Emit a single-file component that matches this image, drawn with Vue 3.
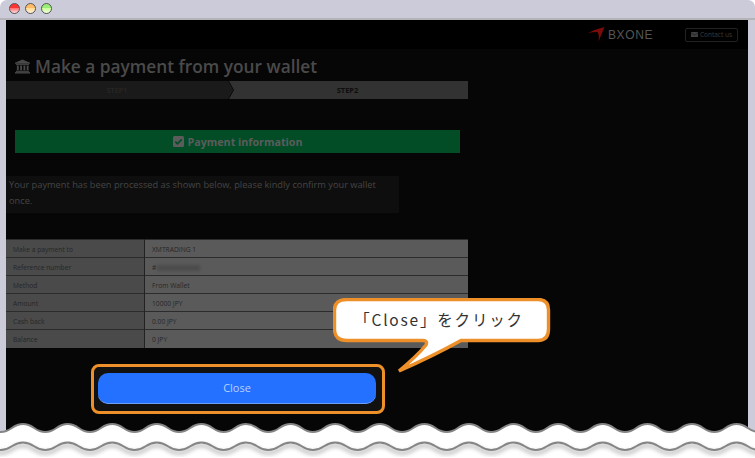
<template>
  <div class="shot">
    <div class="window">
      <!-- Title bar -->
      <div class="titlebar">
        <span class="dot red"></span>
        <span class="dot amber"></span>
        <span class="dot green"></span>
      </div>

      <div class="page">
        <!-- Header -->
        <header class="topbar">
          <div class="logo">
            <svg width="17" height="15" viewBox="0 0 17 15">
              <path d="M0 6 Q8 2 16.500 0 L10.500 14.500 Q11.500 8 9.500 5 Q4.500 5 0 6 Z" fill="#7a0b0b" />
            </svg>
            <span class="logo-text">BXONE</span>
          </div>
          <div class="contact">
            <svg width="7" height="5" viewBox="0 0 14 10">
              <rect width="14" height="10" rx="1" fill="#3f3f3f" />
              <path d="M0 2 L7 6 L14 2" fill="none" stroke="#111" stroke-width="1" />
            </svg>
            Contact us
          </div>
        </header>

        <main class="body">
          <div class="col">
            <h1 class="title">
              <svg width="15" height="15" viewBox="0 0 16 16">
                <path d="M8 0.500 L16 4 V5 H0 V4 Z" fill="#4a4a4a" />
                <rect x="1" y="5.500" width="14" height="1" fill="#4a4a4a" />
                <rect x="2" y="7" width="2" height="5" fill="#4a4a4a" />
                <rect x="5.500" y="7" width="2" height="5" fill="#4a4a4a" />
                <rect x="9" y="7" width="2" height="5" fill="#4a4a4a" />
                <rect x="12.500" y="7" width="2" height="5" fill="#4a4a4a" />
                <rect x="1" y="12.500" width="14" height="1.200" fill="#4a4a4a" />
                <rect x="0" y="14" width="16" height="1.500" fill="#4a4a4a" />
              </svg>
              Make a payment from your wallet
            </h1>

            <div class="steps">
              <div class="step one">STEP1</div>
              <svg class="chevron" width="7" height="18" viewBox="0 0 7 18">
                <rect width="7" height="18" fill="#323232" />
                <path d="M0 0 L5 9 L0 18 Z" fill="#1a1a1a" />
                <path d="M0.500 0 L5.500 9 L0.500 18" fill="none" stroke="#060606" stroke-width="1" />
              </svg>
              <div class="step two">STEP2</div>
            </div>

            <div class="info-bar">
              <svg width="11" height="11" viewBox="0 0 11 11">
                <rect width="11" height="11" rx="1.500" fill="#5c5c5c" />
                <path d="M2.300 5.600 L4.500 7.800 L8.700 3.400" fill="none" stroke="#024d26" stroke-width="1.700" />
              </svg>
              Payment information
            </div>

            <p class="message">Your payment has been processed as shown below, please kindly confirm your wallet once.</p>

            <table class="detail">
              <tbody>
                <tr v-for="row in rows" :key="row.label">
                  <th>{{ row.label }}</th>
                  <td>
                    <template v-if="row.hidden">#<span class="masked"></span></template>
                    <template v-else>{{ row.value }}</template>
                  </td>
                </tr>
              </tbody>
            </table>

            <div class="close-ring">
              <button class="close-btn">Close</button>
            </div>
          </div>
        </main>
      </div>
    </div>

    <!-- Callout -->
    <svg class="callout" width="222" height="78" viewBox="0 0 222 78">
      <path
        d="M14 1.500 H205 Q215.500 1.500 215.500 12 V31 Q215.500 42.500 205 42.500 H128 Q100 58 66 73 Q84 58 93 47 Q95 42.500 90 42.500 H14 Q1.500 42.500 1.500 31 V12 Q1.500 1.500 14 1.500 Z"
        fill="#fff" stroke="#ee9029" stroke-width="3.400" />
      <text x="106" y="28" text-anchor="middle" class="callout-text">「Close」をクリック</text>
    </svg>

    <!-- Torn edge -->
    <svg class="tear" width="755" height="40" viewBox="0 0 755 40">
      <defs>
        <filter id="soft" x="-5%" y="-50%" width="110%" height="200%">
          <feGaussianBlur stdDeviation="2" />
        </filter>
      </defs>
      <path :d="fillPath" fill="#fff" />
      <path :d="lowerWave(3)" fill="none" stroke="#777" stroke-width="3" opacity="0.55" filter="url(#soft)" />
      <path :d="upperWave" fill="none" stroke="#858585" stroke-width="2" />
      <path :d="lowerWave(0)" fill="none" stroke="#858585" stroke-width="2" />
    </svg>
  </div>
</template>

<script setup>
const rows = [
  { label: 'Make a payment to', value: 'XMTRADING 1' },
  { label: 'Reference number', hidden: true },
  { label: 'Method', value: 'From Wallet' },
  { label: 'Amount', value: '10000 JPY' },
  { label: 'Cash back', value: '0.00 JPY' },
  { label: 'Balance', value: '0 JPY' },
]

// y values are relative to the top of the tear svg (page y 418)
const PERIOD = 44.6

function wave(top, bottom) {
  let x = 23 - PERIOD
  let d = `M${x} ${top}`
  while (x < 780) {
    const q = PERIOD / 4
    d += ` C${x + q} ${top} ${x + q} ${bottom} ${x + 2 * q} ${bottom}`
    d += ` C${x + 3 * q} ${bottom} ${x + 3 * q} ${top} ${x + 4 * q} ${top}`
    x += PERIOD
  }
  return d
}

const upperWave = wave(6, 14)
const lowerWave = (shift) => wave(24.5 + shift, 32 + shift)
const fillPath = upperWave + ' V40 H-30 Z'
</script>

<style scoped>
.shot {
  position: relative;
  width: 755px;
  height: 458px;
  overflow: hidden;
  background: #fff;
  font-family: "Open Sans", "Noto Sans", sans-serif;
}

.window {
  height: 458px;
  display: flex;
  flex-direction: column;
  background: #cbcbd9;
  border-radius: 7px 7px 0 0;
  padding: 0 7px 0 6px;
  box-sizing: border-box;
}

/* ── Title bar ── */
.titlebar {
  flex: 0 0 20px;
  box-sizing: border-box;
  display: flex;
  align-items: center;
  gap: 5px;
  padding: 0 0 2px 9px;
  border-bottom: 2px solid #b4b4b8;
  margin: 0 -7px 0 -6px;
}

.dot {
  width: 11px;
  height: 11px;
  border-radius: 50%;
  border: 1px solid #555;
  box-sizing: border-box;
}
.dot.red { background: linear-gradient(#f33 0 50%, #f77 50%, #fdd); }
.dot.amber { background: linear-gradient(#fb6 0 50%, #fd9 50%, #fff0d8); }
.dot.green { background: linear-gradient(#9e7 0 50%, #cf9 50%, #efd); }

/* ── Page ── */
.page {
  flex: 1;
  background: #060606;
  display: flex;
  flex-direction: column;
}

.topbar {
  flex: 0 0 29px;
  background: #000;
  display: flex;
  align-items: center;
  justify-content: flex-end;
  padding-right: 10px;
}

.logo {
  display: flex;
  align-items: center;
  gap: 3px;
  margin-right: 32px;
}

.logo-text {
  font-family: "Liberation Sans", sans-serif;
  font-size: 12px;
  letter-spacing: 0.6px;
  color: #565656;
}

.contact {
  width: 53px;
  height: 14px;
  box-sizing: border-box;
  border: 1px solid #222;
  border-radius: 2px;
  display: flex;
  align-items: center;
  justify-content: center;
  gap: 2px;
  font-size: 6.5px;
  color: #3c3c3c;
}

.col {
  width: 462px;
}

.title {
  margin: 0;
  height: 32px;
  box-sizing: border-box;
  padding: 3px 0 0 9px;
  display: flex;
  align-items: center;
  gap: 5px;
  font-size: 17.300px;
  font-weight: 600;
  color: #4a4a4a;
  white-space: nowrap;
}

/* ── Steps ── */
.steps {
  display: flex;
  height: 18px;
}

.step {
  font-size: 7.500px;
  line-height: 18px;
  text-align: center;
  font-weight: 700;
}
.step.one {
  flex: 0 0 222px;
  background: #1a1a1a;
  color: #2c2c2c;
  font-weight: 400;
}
.step.two {
  flex: 1;
  background: #323232;
  color: #0d0d0d;
  padding-right: 8px;
}
.chevron { flex-shrink: 0; }

/* ── Green bar ── */
.info-bar {
  margin: 31px 8px 0 9px;
  height: 23px;
  background: #024d26;
  display: flex;
  align-items: center;
  justify-content: center;
  gap: 4px;
  font-size: 10.700px;
  font-weight: 700;
  color: #5c5c5c;
}

.message {
  margin: 23px 69px 0 0;
  height: 37px;
  box-sizing: border-box;
  padding: 1px 0 0 3px;
  background: #0e0e0e;
  font-size: 9.250px;
  line-height: 16px;
  color: #454545;
}

/* ── Table ── */
.detail {
  margin-top: 26px;
  width: 462px;
  height: 108px;
  border-collapse: collapse;
  table-layout: fixed;
  font-size: 6.700px;
  color: #262626;
}
.detail tr { height: 18px; }
.detail th,
.detail td {
  padding: 1px 0 0 7px;
  border-top: 1px solid #2c2c2c;
  font-weight: 400;
  text-align: left;
}
.detail th {
  width: 131px;
  background: #4a4a4a;
  border-right: 1px solid #222;
}
.detail td { background: #5a5a5a; }

.masked {
  display: inline-block;
  width: 43px;
  height: 6px;
  margin-left: 1px;
  vertical-align: -1px;
  background: #4c4c4c;
  filter: blur(1.5px);
}

/* ── Close button ── */
.close-ring {
  margin: 16px 0 0 85px;
  width: 294px;
  height: 50px;
  box-sizing: border-box;
  border: 3px solid #ee9029;
  border-radius: 8px;
  background: #111;
  padding: 6px 6px 0 4px;
}

.close-btn {
  display: block;
  width: 278px;
  height: 31px;
  border: none;
  border-bottom: 1px solid #6ea0f5;
  border-radius: 10px;
  background: #2470ff;
  color: #b8d0ff;
  font-family: "Open Sans", sans-serif;
  font-size: 11px;
  padding: 0;
}

/* ── Overlays ── */
.callout {
  position: absolute;
  left: 333px;
  top: 298px;
}
.callout-text {
  font-family: "Noto Sans CJK JP", "Noto Sans", sans-serif;
  font-size: 15.500px;
  font-weight: 400;
  letter-spacing: 1.800px;
  fill: #333;
}

.tear {
  position: absolute;
  left: 0;
  top: 418px;
}
</style>
